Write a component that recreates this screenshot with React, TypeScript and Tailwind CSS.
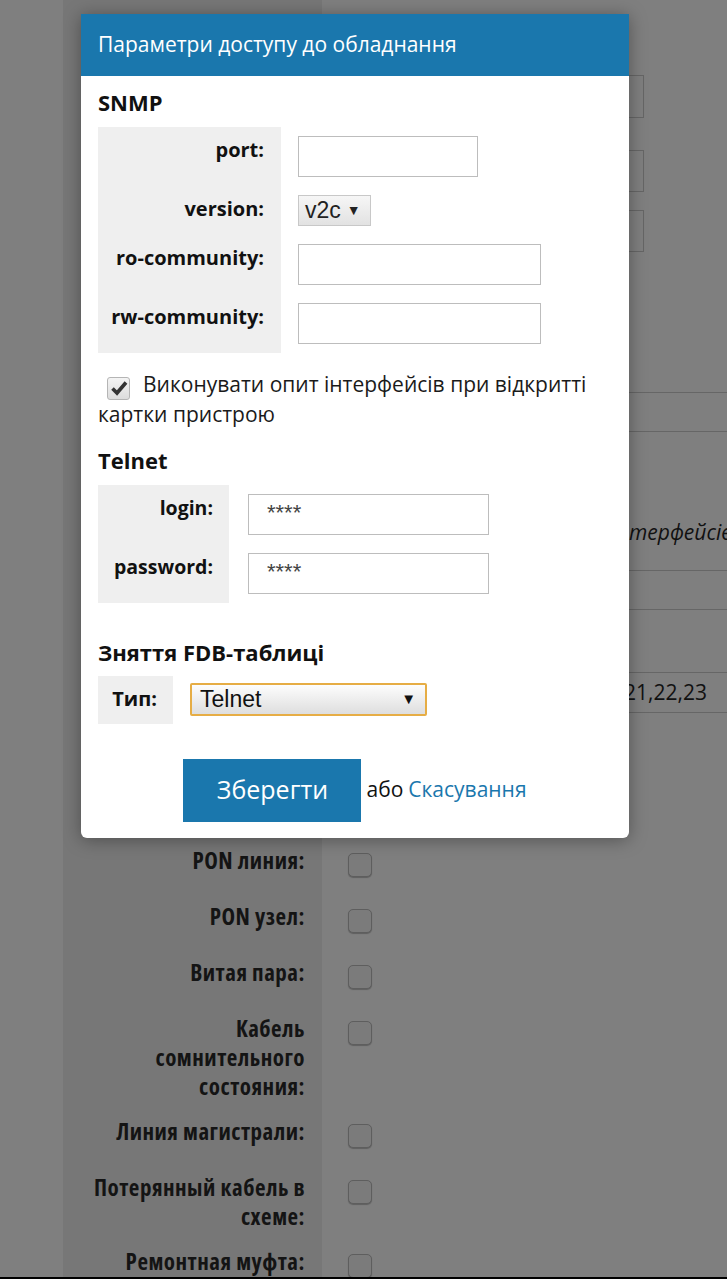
const snmpRows = [
  { label: "port:", kind: "input", width: "w-[180px]" },
  { label: "version:", kind: "select", width: "" },
  { label: "ro-community:", kind: "input", width: "w-[243px]" },
  { label: "rw-community:", kind: "input", width: "w-[243px]" },
];

const telnetRows = [
  { label: "login:", value: "****" },
  { label: "password:", value: "****" },
];

const backRows = [
  { lines: ["PON линия:"] },
  { lines: ["PON узел:"] },
  { lines: ["Витая пара:"] },
  { lines: ["Кабель", "сомнительного", "состояния:"] },
  { lines: ["Линия магистрали:"] },
  { lines: ["Потерянный кабель в", "схеме:"] },
  { lines: ["Ремонтная муфта:"] },
];

function CheckMark() {
  return (
    <span className="flex h-[23px] w-[23px] items-center justify-center rounded-[3px] border border-[#b5b5b5] bg-[linear-gradient(#f4f4f4,#dcdcdc)]">
      <svg width="18" height="16" viewBox="0 0 18 16">
        <polyline points="2.5,8.5 7,13 16,2.5" fill="none" stroke="#333" strokeWidth="3.6" strokeLinejoin="miter" />
      </svg>
    </span>
  );
}

export default function App() {
  return (
    <div className="relative flex h-[1279px] w-[727px] flex-col overflow-hidden bg-[#7f7f7f] font-['Open_Sans',sans-serif]">
      {/* dimmed page behind the dialog */}
      <div className="ml-[63px] flex flex-col">
        <div className="flex h-[838px]">
          <div className="w-[259px] shrink-0 bg-[#777777]" />
          <div className="flex flex-1 flex-col pl-[26px]">
            <div className="mt-[75px] h-[43px] w-[296px] border border-[#666]" />
            <div className="mt-[32px] h-[42px] w-[296px] border border-[#666]" />
            <div className="mt-[18px] h-[42px] w-[296px] border border-[#666]" />
            <div className="mt-[140px] h-[40px] w-[440px] border-y border-[#666]" />
            <div className="mt-[85px] h-[30px] whitespace-nowrap pl-[281px] text-[21px] leading-[30px] italic text-[#111]">
              терфейсів
            </div>
            <div className="mt-[23px] h-[40px] w-[440px] border-y border-[#666]" />
            <div className="mt-[62px] flex h-[41px] w-[440px] items-center border-y border-[#666] pl-[276px] text-[21px] text-[#111]">
              21,22,23
            </div>
          </div>
        </div>
        {backRows.map((row) => (
          <div key={row.lines.join(" ")} className="flex">
            <div className="min-h-[56px] w-[259px] shrink-0 bg-[#777777] py-[8px] pr-[17px] text-right text-[23px] leading-[29px] font-bold font-stretch-condensed tracking-[0.5px] text-[#141414]">
              {row.lines.map((l) => (
                <div key={l} className="whitespace-nowrap">{l}</div>
              ))}
            </div>
            <div className="flex-1 pl-[26px] pt-[15px]">
              <div className="h-[24px] w-[24px] rounded-[5px] border border-[#5e5e5e] bg-[#7b7b7b] shadow-[0_1px_1px_rgba(0,0,0,0.25)]" />
            </div>
          </div>
        ))}
      </div>
      <div className="absolute bottom-0 left-0 h-[2px] w-full bg-black" />

      {/* dialog */}
      <div className="absolute left-[81px] top-[14px] w-[548px] overflow-hidden rounded-b-[6px] bg-white shadow-[0_2px_18px_rgba(0,0,0,0.35)]">
        <div className="flex h-[62px] items-center bg-[#1a77ad] px-[17px] text-[21px] text-white">
          Параметри доступу до обладнання
        </div>
        <div className="px-[17px] pb-[16px] text-[#111]">
          <h2 className="mt-[12px] text-[22px] leading-[28px] font-bold">SNMP</h2>
          <div className="mt-[11px] flex">
            <div className="w-[183px] bg-[#efefef]">
              {snmpRows.map((r) => (
                <div
                  key={r.label}
                  className={`pr-[17px] text-right text-[20px] leading-[24px] font-bold ${r.kind === "select" ? "h-[49px] pt-[11px]" : "h-[59px] pt-[11px]"}`}
                >
                  {r.label}
                </div>
              ))}
            </div>
            <div className="flex flex-col pl-[17px]">
              {snmpRows.map((r) =>
                r.kind === "select" ? (
                  <div key={r.label} className="flex h-[49px] items-start pt-[9px]">
                    <div className="flex h-[31px] w-[73px] items-center gap-[6px] border border-[#c8c8c8] bg-[linear-gradient(#f6f6f6,#e2e2e2)] pl-[6px] font-['Liberation_Sans',sans-serif] text-[23px] text-[#222]">
                      v2c
                      <span className="text-[14px]">▼</span>
                    </div>
                  </div>
                ) : (
                  <div key={r.label} className="flex h-[59px] items-start pt-[9px]">
                    <div className={`h-[41px] ${r.width} border border-[#bdbdbd] bg-white`} />
                  </div>
                )
              )}
            </div>
          </div>

          <div className="mt-[17px] text-[21px] leading-[29px] text-[#1a1a1a]">
            <span className="ml-[9px] mr-[13px] inline-block h-[23px] align-[-4px] leading-none">
              <CheckMark />
            </span>
            Виконувати опит інтерфейсів при відкритті картки пристрою
          </div>

          <h2 className="mt-[17px] text-[22px] leading-[28px] font-bold">Telnet</h2>
          <div className="mt-[11px] flex">
            <div className="w-[131px] bg-[#efefef]">
              {telnetRows.map((r) => (
                <div key={r.label} className="h-[59px] pt-[11px] pr-[16px] text-right text-[19.5px] leading-[24px] font-bold">
                  {r.label}
                </div>
              ))}
            </div>
            <div className="flex flex-col pl-[19px]">
              {telnetRows.map((r) => (
                <div key={r.label} className="h-[59px] pt-[9px]">
                  <div className="flex h-[41px] w-[241px] items-start border border-[#bdbdbd] bg-white pl-[18px] pt-[6px] font-['Liberation_Sans',sans-serif] text-[22px] leading-[24px] text-[#444]">
                    {r.value}
                  </div>
                </div>
              ))}
            </div>
          </div>

          <h2 className="mt-[35px] text-[22px] leading-[28px] font-bold">Зняття FDB-таблиці</h2>
          <div className="mt-[10px] flex">
            <div className="h-[48px] w-[75px] bg-[#efefef] pr-[16px] pt-[11px] text-right text-[20px] leading-[24px] font-bold">
              Тип:
            </div>
            <div className="pl-[17px] pt-[7px]">
              <div className="flex h-[33px] w-[237px] items-center justify-between rounded-[2px] border-2 border-[#e6ad45] bg-[linear-gradient(#fdfdfd,#dedede)] pl-[8px] pr-[9px] font-['Liberation_Sans',sans-serif] text-[23px] text-[#111]">
                Telnet
                <span className="text-[15px]">▼</span>
              </div>
            </div>
          </div>

          <div className="mt-[35px] flex items-center justify-center text-[21px]">
            <button className="h-[63px] w-[178px] bg-[#1a77ad] text-[25px] text-white">Зберегти</button>
            <span className="ml-[5px] text-[#111]">або</span>
            <a className="ml-[5px] text-[#1a77ad]">Скасування</a>
          </div>
        </div>
      </div>
    </div>
  );
}
